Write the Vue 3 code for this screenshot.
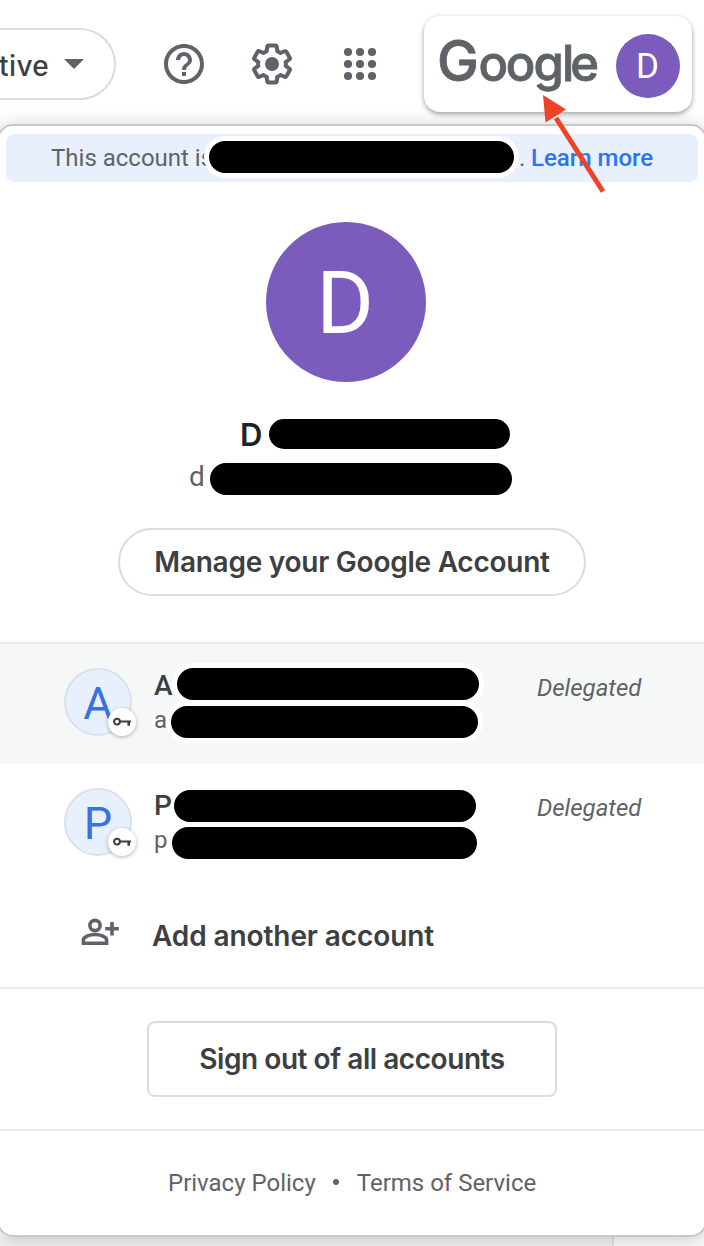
<script setup>
const accounts = [
  { initial: 'A', mail: 'a', key: 'first', active: true },
  { initial: 'P', mail: 'p', key: 'second', active: false },
]
</script>

<template>
  <div class="page">
    <header class="topbar">
      <div class="status-pill">
        <span class="status-text">tive</span>
        <svg class="caret" width="20" height="10" viewBox="0 0 20 10"><path d="M0 0h20L10 10z" /></svg>
      </div>
      <svg class="tool help" width="48" height="48" viewBox="0 0 24 24">
        <path d="M11 18h2v-2h-2v2zm1-16C6.48 2 2 6.48 2 12s4.48 10 10 10 10-4.48 10-10S17.52 2 12 2zm0 18c-4.41 0-8-3.59-8-8s3.59-8 8-8 8 3.59 8 8-3.59 8-8 8zm0-14c-2.21 0-4 1.79-4 4h2c0-1.1.9-2 2-2s2 .9 2 2c0 2-3 1.75-3 5h2c0-2.25 3-2.5 3-5 0-2.21-1.79-4-4-4z" />
      </svg>
      <svg class="tool" width="48" height="48" viewBox="0 0 24 24">
        <path d="M13.85 22.25h-3.7c-.74 0-1.36-.54-1.45-1.27l-.27-1.89c-.27-.14-.53-.29-.79-.46l-1.8.72c-.7.26-1.47-.03-1.81-.65L2.2 15.53c-.35-.66-.2-1.44.36-1.88l1.53-1.19c-.01-.15-.02-.3-.02-.46 0-.15.01-.31.02-.46l-1.52-1.19c-.59-.45-.74-1.26-.37-1.88l1.85-3.19c.34-.62 1.11-.9 1.79-.63l1.81.73c.26-.17.52-.32.78-.46l.27-1.91c.09-.7.71-1.25 1.44-1.25h3.7c.74 0 1.36.54 1.45 1.27l.27 1.89c.27.14.53.29.79.46l1.8-.72c.71-.26 1.48.03 1.82.65l1.84 3.18c.36.66.2 1.44-.36 1.88l-1.52 1.19c.01.15.02.3.02.46s-.01.31-.02.46l1.52 1.19c.56.45.72 1.23.37 1.86l-1.86 3.22c-.34.62-1.11.9-1.8.63l-1.8-.72c-.26.17-.52.32-.78.46l-.27 1.91c-.1.68-.72 1.22-1.46 1.22zm-3.23-2h2.76l.37-2.55.53-.22c.44-.18.88-.44 1.34-.78l.45-.34 2.38.96 1.38-2.4-2.03-1.58.07-.56c.03-.26.06-.51.06-.78s-.03-.53-.06-.78l-.07-.56 2.03-1.58-1.39-2.4-2.39.96-.45-.35c-.42-.32-.87-.58-1.33-.77l-.52-.22-.37-2.55h-2.76l-.37 2.55-.53.21c-.44.19-.88.44-1.34.79l-.45.33-2.38-.95-1.39 2.39 2.03 1.58-.07.56a7 7 0 0 0-.06.79c0 .26.02.53.06.78l.07.56-2.03 1.58 1.38 2.4 2.39-.96.45.35c.43.33.86.58 1.33.77l.53.22.38 2.55z" />
        <circle cx="12" cy="12" r="3.5" />
      </svg>
      <svg class="tool" width="48" height="48" viewBox="0 0 48 48">
        <template v-for="y in [12, 24, 36]" :key="y">
          <circle v-for="x in [12, 24, 36]" :key="x" :cx="x" :cy="y" r="4.1" />
        </template>
      </svg>
      <div class="brand-card">
        <svg class="wordmark" width="160" height="64" viewBox="0 0 160 64">
          <text x="-3 38.5 65.8 93.4 122 130.2" y="47" class="word"><tspan class="cap">G</tspan>oogle</text>
        </svg>
        <div class="avatar-small">D</div>
      </div>
    </header>

    <main class="panel">
      <div class="notice">
        <span class="notice-text">This account is</span>
        <span class="redacted bar-notice"></span>
        <span class="dot">.</span>
        <a class="learn">Learn more</a>
      </div>

      <section class="profile">
        <div class="avatar-large">D</div>
        <div class="name-line"><span>D</span><span class="redacted bar-name"></span></div>
        <div class="mail-line"><span>d</span><span class="redacted bar-mail"></span></div>
        <button class="manage"><span>Manage your Google Account</span></button>
      </section>

      <section class="accounts">
        <div v-for="a in accounts" :key="a.key" class="account" :class="[a.key, { active: a.active }]">
          <div class="avatar-account">
            {{ a.initial }}
            <span class="badge">
              <svg width="20" height="12" viewBox="0 0 20 12">
                <circle cx="5" cy="5.6" r="2.9" fill="none" stroke="#3c4043" stroke-width="2.1" />
                <path d="M8 4.6h11v2h-1v3.2h-2.6V6.6H8z" fill="#3c4043" />
              </svg>
            </span>
          </div>
          <div class="identity">
            <div class="account-name"><span>{{ a.initial }}</span><span class="redacted"></span></div>
            <div class="account-mail"><span>{{ a.mail }}</span><span class="redacted"></span></div>
          </div>
          <em class="delegated">Delegated</em>
        </div>
        <div class="add-account">
          <svg width="38" height="28" viewBox="0 0 38 28">
            <circle cx="14" cy="7.5" r="5.1" fill="none" stroke="#5f6368" stroke-width="3.6" />
            <path d="M2.4 25.3v-3.2c0-3.6 7.2-5.6 11.6-5.6s11.6 2 11.6 5.6v3.2z" fill="none" stroke="#5f6368" stroke-width="3.6" />
            <path d="M29.2 4h3.6v5h5v3.6h-5v5h-3.6v-5h-5V9h5z" fill="#5f6368" />
          </svg>
          <span>Add another account</span>
        </div>
      </section>

      <section class="signout-area">
        <button class="signout"><span>Sign out of all accounts</span></button>
      </section>

      <footer class="links">
        <a class="privacy">Privacy Policy</a><i class="sep"></i><a class="terms">Terms of Service</a>
      </footer>
    </main>
    <div class="below"></div>

    <svg class="arrow" width="70" height="104" viewBox="0 0 70 104">
      <path d="M18 24L65 97.5" stroke="#ee4326" stroke-width="5" />
      <path d="M5 1L28 15.5L7.5 28.5z" fill="#ee4326" />
    </svg>
  </div>
</template>

<style>
body {
  margin: 0;
  background: #fff;
}
</style>

<style scoped>
* {
  box-sizing: border-box;
}
.page {
  position: relative;
  width: 704px;
  height: 1246px;
  overflow: hidden;
  background: #fff;
  font-family: Roboto, sans-serif;
  color: #5f6368;
}
.topbar {
  position: relative;
  z-index: 2;
  height: 124px;
  display: flex;
  align-items: center;
}
.topbar > * {
  flex: none;
}
.status-pill {
  width: 156px;
  height: 72px;
  margin: 4px 0 0 -40px;
  border: 2px solid #dadce0;
  border-radius: 36px;
  display: flex;
  align-items: center;
  padding-left: 37px;
}
.status-text {
  width: 51px;
  margin-top: 3px;
  font: 500 28px/32px Inter, sans-serif;
  letter-spacing: 0.4px;
  color: #3c4043;
}
.caret {
  margin-left: 14px;
  fill: #5f6368;
}
.tool {
  margin: 4px 0 0 40px;
  fill: #5f6368;
}
.help {
  margin-left: 44px;
}
.brand-card {
  width: 268px;
  height: 96px;
  margin: 4px 0 0 40px;
  border-radius: 16px;
  background: #fff;
  box-shadow: 0 2px 5px rgba(60, 64, 67, 0.5);
  display: flex;
  align-items: center;
  padding: 4px 12px 0 16px;
}
.wordmark {
  margin-right: 16px;
  overflow: visible;
}
.word {
  font: 500 49px Inter, sans-serif;
  fill: #5f6368;
  stroke: #5f6368;
  stroke-width: 0.8px;
}
.cap {
  font-size: 56px;
}
.avatar-small {
  width: 64px;
  height: 64px;
  flex: none;
  border-radius: 50%;
  background: #7b5bbb;
  color: #fff;
  font-size: 35px;
  line-height: 66px;
  text-align: center;
  text-indent: -1px;
}
.panel {
  position: relative;
  z-index: 1;
  width: 710px;
  height: 1113px;
  margin-left: -3px;
  padding: 0 1px;
  border: 2px solid #c8c8c8;
  border-radius: 16px;
  background: #fff;
  box-shadow: 0 3px 20px rgba(0, 0, 0, 0.22);
}
.redacted {
  flex: none;
  background: #000;
  border-radius: 16px;
  height: 32px;
  box-shadow: 0 0 0 5px #fff;
}
.notice {
  height: 48px;
  margin: 8px 6px 0;
  padding-left: 45px;
  border-radius: 8px;
  background: #e8f0fe;
  display: flex;
  align-items: center;
  font-size: 24px;
  white-space: nowrap;
}
.notice-text {
  width: 153px;
  flex: none;
}
.bar-notice {
  width: 305px;
  margin: -2px 0 0 5px;
}
.dot {
  width: 12px;
  margin-left: 5px;
}
.learn {
  color: #2a73f4;
  font-weight: 500;
}
.profile {
  height: 462px;
  padding-top: 40px;
  border-bottom: 2px solid #e8eaed;
}
.avatar-large {
  width: 160px;
  height: 160px;
  margin-left: 266px;
  border-radius: 50%;
  background: #7b5bbb;
  color: #fff;
  font-size: 88px;
  line-height: 162px;
  text-align: center;
  text-indent: -2px;
}
.name-line,
.mail-line {
  display: flex;
  align-items: center;
}
.name-line {
  height: 30px;
  margin: 37px 0 0 240px;
  color: #202124;
  font: 600 31px/30px Inter, sans-serif;
}
.name-line > span:first-child {
  width: 29px;
  margin-top: 2px;
}
.bar-name {
  width: 241px;
  height: 30px;
}
.mail-line {
  height: 32px;
  margin: 14px 0 0 189px;
  font-size: 28px;
}
.mail-line > span:first-child {
  width: 21px;
  margin-top: -6px;
}
.bar-mail {
  width: 302px;
}
button {
  display: flex;
  align-items: center;
  justify-content: center;
  padding: 0;
  background: #fff;
  border: 2px solid #dadce0;
  color: #3c4043;
  font: 600 28px/34px Inter, sans-serif;
  white-space: nowrap;
}
.manage {
  width: 468px;
  height: 68px;
  margin: 33px 0 0 118px;
  border-radius: 34px;
  letter-spacing: -0.25px;
}
.account {
  height: 120px;
  padding: 24px 0 0 64px;
  display: flex;
}
.active {
  background: #f6f8f8;
}
.avatar-account {
  position: relative;
  width: 68px;
  height: 68px;
  flex: none;
  border: 2px solid #dae0ed;
  border-radius: 50%;
  background: #e8f0fe;
  color: #3871e0;
  font-size: 45px;
  line-height: 68px;
  text-align: center;
}
.badge {
  position: absolute;
  left: 42px;
  top: 38px;
  width: 28px;
  height: 28px;
  border-radius: 50%;
  background: #fff;
  box-shadow: 0 1px 4px rgba(60, 64, 67, 0.4);
  display: flex;
  align-items: center;
  justify-content: center;
}
.identity {
  width: 382px;
  margin-left: 22px;
}
.account-name,
.account-mail {
  height: 32px;
  display: flex;
  align-items: center;
}
.account-name {
  font-size: 28px;
  font-weight: 500;
  color: #3c4043;
}
.account-mail {
  margin-top: 6px;
  font-size: 24px;
}
.account-name > span:first-child,
.account-mail > span:first-child {
  flex: none;
}
.account-name > span:first-child {
  position: relative;
  z-index: 1;
}
.first .account-name > span:first-child {
  width: 23px;
  margin-top: 3px;
}
.first .account-name .redacted {
  width: 302px;
}
.first .account-mail > span:first-child {
  width: 17px;
  margin-top: -4px;
}
.first .account-mail .redacted {
  width: 307px;
}
.second .identity {
  padding-top: 2px;
}
.second .account-name > span:first-child {
  width: 20px;
  margin-top: -1px;
}
.second .account-name .redacted {
  width: 302px;
}
.second .account-mail {
  margin-top: 5px;
}
.second .account-mail > span:first-child {
  width: 18px;
  margin-top: -6px;
}
.second .account-mail .redacted {
  width: 305px;
}
.delegated {
  margin: 5px 0 0 1px;
  font-size: 24px;
  line-height: 30px;
}
.add-account {
  height: 105px;
  padding: 0 0 2px 81px;
  border-bottom: 2px solid #e8eaed;
  display: flex;
  align-items: center;
  color: #3c4043;
  font: 600 28px/34px Inter, sans-serif;
}
.add-account svg {
  flex: none;
  margin-top: -6px;
}
.add-account span {
  margin: 2px 0 0 33px;
  letter-spacing: -0.1px;
}
.signout-area {
  height: 142px;
  padding-top: 32px;
  border-bottom: 2px solid #e8eaed;
}
.signout {
  width: 410px;
  height: 76px;
  margin-left: 147px;
  border-radius: 8px;
  letter-spacing: -0.45px;
}
.links {
  display: flex;
  align-items: center;
  height: 104px;
  padding-left: 168px;
  font-size: 24px;
  white-space: nowrap;
}
.sep {
  width: 6px;
  height: 6px;
  margin: -3px 18px 0 17px;
  border-radius: 50%;
  background: #5f6368;
}
.below {
  width: 614px;
  height: 10px;
  border-right: 2px solid #e3e5e8;
  background: #f6f6f6;
}
.arrow {
  position: absolute;
  z-index: 3;
  left: 538px;
  top: 94px;
}
</style>
